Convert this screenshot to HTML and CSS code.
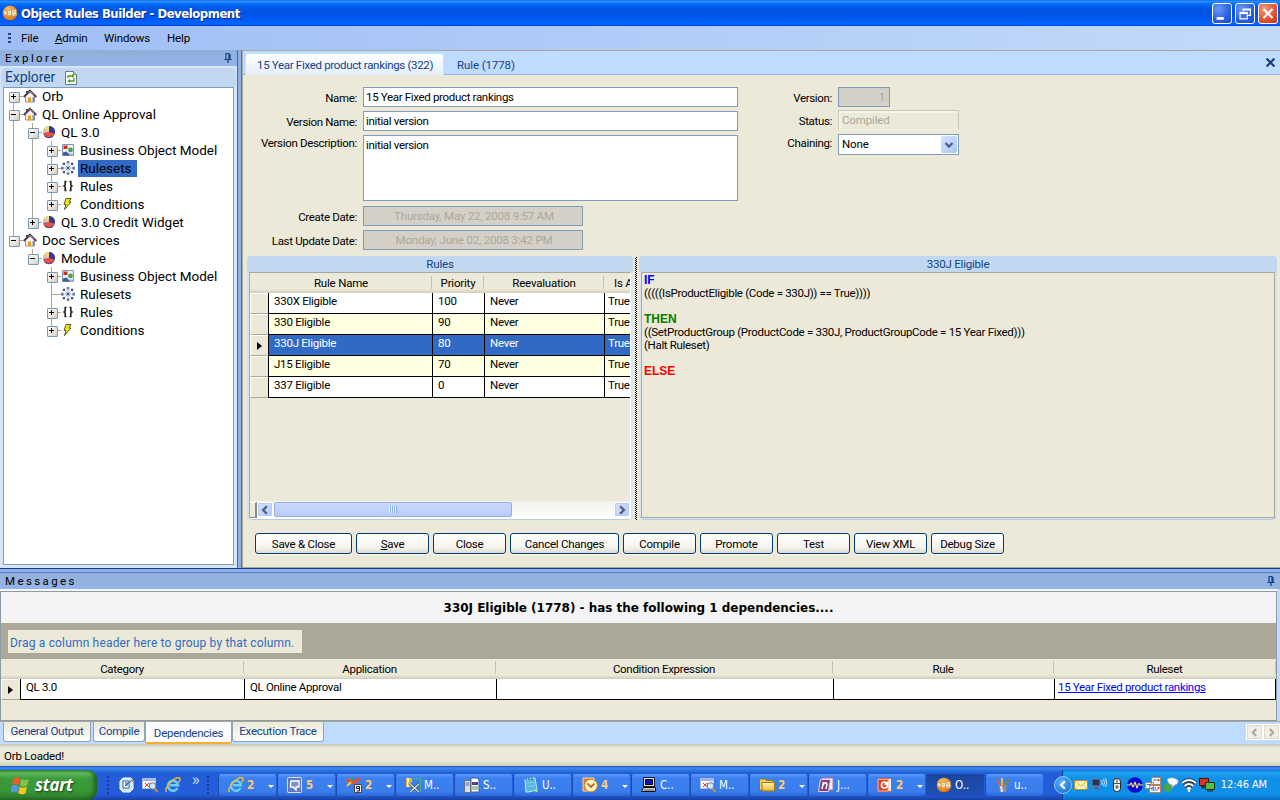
FILE: index.html
```html
<!DOCTYPE html>
<html lang="en">
<head>
<meta charset="utf-8">
<title>Object Rules Builder - Development</title>
<link rel="stylesheet" href="styles.css">
</head>
<body>
<svg class="defs" width="0" height="0" aria-hidden="true">
  <defs>
    <radialGradient id="g-orb" cx=".4" cy=".3" r=".8"><stop offset="0" stop-color="#ffc45c"/><stop offset="1" stop-color="#d96c05"/></radialGradient>
    <linearGradient id="g-fold" x2="0" y2="1"><stop offset="0" stop-color="#fff2a8"/><stop offset="1" stop-color="#e9b93a"/></linearGradient>
    <symbol id="orb" viewBox="0 0 16 16"><circle cx="8" cy="8" r="7.300" fill="url(#g-orb)"/><path d="M1 6.500l3-1 1.500 3L3 10.500zM5.500 6l3-1 1.500 3-2 3-3-1zM10 5l4.500-.5L14 7l1 3-4 1.500-1.500-3z" fill="#f9ecd0" stroke="#b07a35" stroke-width=".5"/><path d="M6.500 8h1.500M11 7h2M11.500 9.500h2" stroke="#a98a5a" stroke-width=".8"/></symbol>
    <symbol id="house" viewBox="0 0 14 14"><path d="M3 2h2v4H3z" fill="#445"/><path d="M2.500 7v6h9V7L7.500 3z" fill="#f4f2ea" stroke="#777" stroke-width=".8"/><path d="M.7 8L7 1.500 13.300 8" fill="none" stroke="#4d4268" stroke-width="1.900"/><path d="M7 2l4 4" stroke="#b8764a" stroke-width="1"/><path d="M5 8.500h3V13H5z" fill="#e69b1c"/><path d="M9.500 8h2v5h-2z" fill="#868cab"/></symbol>
    <symbol id="pie" viewBox="0 0 14 14"><circle cx="7" cy="7" r="6" fill="#5b68c0"/><path d="M1.500 9.500A6 6 0 0 0 12.700 9L7 6.500z" fill="#e8503a"/><path d="M7 7L12.800 8.500A6 6 0 0 0 7 1z" fill="#3a358f"/><path d="M1 8A6 6 0 0 1 7 1v6z" fill="#efc0a4"/><path d="M2.200 4A6 6 0 0 1 7 1v4z" fill="#f2dc78"/><path d="M3 11a6 6 0 0 0 8 0" fill="none" stroke="#4a4fb0" stroke-width="1.200"/></symbol>
    <symbol id="bom" viewBox="0 0 14 14"><path d="M1.500 1.500h11v11h-11z" fill="#eef3fb" stroke="#8493b6"/><path d="M2.500 2.500h4v3.500h-4z" fill="#d92a20"/><circle cx="9.500" cy="7" r="2.400" fill="#4f9e56"/><path d="M2 9.500l3.500-1 4 4H2z" fill="#425c95"/><path d="M8.500 10.500h3.500v2h-3z" fill="#9fb7df"/></symbol>
    <symbol id="net" viewBox="0 0 14 14"><path d="M7 3.500v7M3.500 7h7M4.500 4.500l5 5M9.500 4.500l-5 5" stroke="#5f86c9" stroke-width=".8"/><path d="M5.800.2h2.600v2.300H5.800zM5.800 11.500h2.600v2.300H5.800zM.2 5.800h2.300v2.600H.2zM11.500 5.800h2.300v2.600h-2.300zM1.800 1.800h2.200v2.200H1.800zM10 1.800h2.200v2.200H10zM1.800 10h2.200v2.200H1.800zM10 10h2.200v2.200H10zM6 6h2v2H6z" fill="#3f4c86"/><path d="M6.600.9h1v1h-1zM.8 6.600h1v1h-1zM12.200 6.600h1v1h-1zM6.600 12.200h1v1h-1z" fill="#c2cdea"/></symbol>
    <symbol id="brace" viewBox="0 0 14 14"><path d="M5.500 2.500H4.200v3.500L3 7l1.200 1v3.500H5.500M8.500 2.500H9.800v3.500L11 7 9.800 8v3.500H8.500" fill="none" stroke="#222" stroke-width="1.600"/></symbol>
    <symbol id="bolt" viewBox="0 0 14 14"><path d="M5 1.500h5L8 5h2L3.500 12.500 5 7.500H3z" fill="#f3e51c" stroke="#4b4b12" stroke-width=".9"/></symbol>
    <symbol id="refresh" viewBox="0 0 12 14"><path d="M.5.5h8l3 3v10H.5z" fill="#f8faf5" stroke="#68798a"/><path d="M8.500.5v3h3" fill="#ccd6df" stroke="#68798a"/><path d="M3 7V5h5M9 7v3H4" fill="none" stroke="#4d9b25" stroke-width="1.300"/><path d="M7 3l2.500 2L7 7zM5 8l-2.500 2L5 12z" fill="#4d9b25"/></symbol>
    <symbol id="pin" viewBox="0 0 8 10"><path d="M1.500 .5h4M2 1v5M5 1v5M6 1v5M.5 6.500h7M4 7v3" stroke="#153f83" stroke-width="1.200" fill="none"/></symbol>
    <symbol id="flag" viewBox="0 0 18 18"><path d="M3 3q3-2 6 0L8 9Q5 7 2 9z" fill="#ef5a28"/><path d="M10 3.500q3 2 7 0L15.500 9.500q-3 2-6.500 0z" fill="#82c440"/><path d="M1.700 10q3-2 6 0L6.500 16q-3-2-6 0z" fill="#5e94ee"/><path d="M8.700 10.500q3 2 6.500 0L14 16.500q-3 2-6.500 0z" fill="#fac727"/></symbol>
    <symbol id="ie" viewBox="0 0 16 16"><path d="M12.500 11A5 5 0 1 1 13 8.200H5" fill="none" stroke="#1f7fd6" stroke-width="3.600"/><path d="M12.500 11A5 5 0 1 1 13 8.200H5" fill="none" stroke="#6ccbfa" stroke-width="2.400"/><path d="M1.500 15C-1.500 12 9-1 14.500 1 16 2 14.500 4.500 13.500 5.500" fill="none" stroke="#f4bd2a" stroke-width="1.400"/></symbol>
    <symbol id="desk" viewBox="0 0 16 16"><path d="M1 4l3-3h8l2 3v8l-3 3H4l-3-3z" fill="#cfe5fa" stroke="#fff"/><path d="M4 4h6v7H4z" fill="#fff" stroke="#2b69a8"/><path d="M6 9l7-6M6 6h3M6 8h3" stroke="#1c518b"/><path d="M12 2l3 2-2 1z" fill="#e58a34"/></symbol>
    <symbol id="mag" viewBox="0 0 16 16"><path d="M.5 1.500h13v10H.5z" fill="#f5f5fb" stroke="#b5bddd"/><path d="M1 2h12v2H1z" fill="#9fb5e5"/><path d="M3 6l4 4M7 6l-4 4" stroke="#c3474b"/><path d="M7 7h5" stroke="#4960a3"/><circle cx="10.500" cy="9" r="3.300" fill="#d1ecfa" stroke="#647991"/><path d="M12.500 11.500l3 3.500" stroke="#c98f3c" stroke-width="2"/></symbol>
    <symbol id="speech" viewBox="0 0 16 16"><rect x=".5" y=".5" width="14" height="15" rx="1" fill="#6479bb" stroke="#d7def4"/><path d="M4 4h8v6H9v3l-3-3H3.500V6z" fill="#7d92cc" stroke="#fff" stroke-width="1.300"/></symbol>
    <symbol id="tools" viewBox="0 0 16 16"><path d="M2 2l4-1 3 3-3 3z" fill="#43a34a"/><path d="M1 2q4 5 8 3l5-4" fill="none" stroke="#ed4e2e" stroke-width="3"/><path d="M1 9l4-4" stroke="#f6cb3b" stroke-width="2"/><path d="M8.500 7.500h7v8h-7z" fill="#f7f2e0" stroke="#464646"/><path d="M13.500 11.500h-3v-2h3V14h-3" fill="none" stroke="#222"/></symbol>
    <symbol id="dbtool" viewBox="0 0 16 16"><path d="M5 1.500h10.500v13H5" fill="none" stroke="#55c552" stroke-dasharray="2 1"/><path d="M1 1h6v9H1z" fill="#efba32"/><path d="M2 1h2v9H2z" fill="#fff3b2"/><path d="M4 6l10 9M14 7l-9 8" stroke="#40536c" stroke-width="3"/><path d="M4 6l10 9M14 7l-9 8" stroke="#cfd6de" stroke-width="1.500"/></symbol>
    <symbol id="server" viewBox="0 0 16 16"><path d="M7 1h6l2 2v12H7z" fill="#fff" stroke="#48638f"/><path d="M.5 3.500h6v12h-6z" fill="#d9dfe8" stroke="#65718a"/><path d="M1.500 6h4M1.500 8h4" stroke="#566c92"/><path d="M8 5h6v3H8z" fill="#2c429d"/><path d="M9 6h3" stroke="#e33"/><path d="M8 10h6M8 12h6" stroke="#3c9b43"/></symbol>
    <symbol id="note" viewBox="0 0 16 16"><path d="M2 2l10-1 2 12-9 2H3z" fill="#5ab8dd" stroke="#bceafa"/><path d="M4 6l8-1M5 9h7" stroke="#7fd0ea"/><path d="M3 1v2M6 1v2M9 1v2" stroke="#234e71"/><path d="M12 15l2-3 1 3z" fill="#aadf54"/></symbol>
    <symbol id="outlook" viewBox="0 0 16 16"><path d="M1 1h11v13H1z" fill="#e67c2b" stroke="#ffd6a4"/><circle cx="9" cy="8.500" r="6.300" fill="#fff3bd" stroke="#d88e25"/><path d="M5.500 6.500L9 10l3.500-3.500" fill="none" stroke="#a8601c" stroke-width="1.700"/></symbol>
    <symbol id="pc" viewBox="0 0 16 16"><path d="M2.500.5h11v9h-11z" fill="#e2e2e2" stroke="#161616"/><path d="M4.500 2.500h7v5h-7z" fill="#0713c7" stroke="#000"/><path d="M2.500 10.500h12v4H.5z" fill="#d4d4d4" stroke="#111"/><path d="M3 13h10" stroke="#555"/></symbol>
    <symbol id="folder" viewBox="0 0 16 16"><path d="M.5 3l1-1h5l1 1.500h7V13H.5z" fill="#f3d060" stroke="#956f19"/><path d="M2.500 5.500h13V14h-12z" fill="url(#g-fold)" stroke="#a27a1c"/></symbol>
    <symbol id="journal" viewBox="0 0 16 16"><path d="M4 1h11v12H4z" fill="#f4edf5" stroke="#a47aa4"/><path d="M2.500 2.500h10l-2 12h-10z" fill="#80427a" stroke="#e5d1e8"/><path d="M4 12l1.500-7M5 8q3-4 4-1L8 12" fill="none" stroke="#fff" stroke-width="1.400"/></symbol>
    <symbol id="ppt" viewBox="0 0 16 16"><path d="M2 1.500h12.500v13H2z" fill="#fff0e9" stroke="#db5c3e"/><path d="M1 2.500h10V14H1z" fill="#dc472b" stroke="#f6ab99"/><circle cx="7.500" cy="8" r="3" fill="none" stroke="#fff" stroke-width="1.600"/><path d="M7.500 8V5H11v3z" fill="#fff"/></symbol>
    <symbol id="brush" viewBox="0 0 16 16"><path d="M5 9L2 2M8 9L7 1M9 9l5-6" stroke="#dd6340" stroke-width="2"/><path d="M7 8V1" stroke="#f2da4a" stroke-width="1.500"/><path d="M10 9l3-6" stroke="#489b3e" stroke-width="1.800"/><path d="M4 8h8l-1 7H5z" fill="#8c8f98"/><path d="M5 9h2l1 6H6z" fill="#e4e4e2"/></symbol>
    <symbol id="mail" viewBox="0 0 16 16"><path d="M1.500 3.500h13v9h-13z" fill="#fff4ae" stroke="#ab8b3c"/><path d="M2 4l6 5 6-5M2 12l4-4M14 12l-4-4" fill="none" stroke="#c9a957" stroke-width=".8"/></symbol>
    <symbol id="sound" viewBox="0 0 16 16"><path d="M1 2h8v7H1zM3 10h5v2H3z" fill="#28365b" stroke="#6681ae"/><path d="M10.500 3q1.500 2.500 0 5M12.500 2q2 3.500 0 7M14.500 1q2.500 4.500 0 9" fill="none" stroke="#d6e7fb"/></symbol>
    <symbol id="mouse" viewBox="0 0 16 16"><rect x="4.500" y="1.500" width="7" height="13" rx="3" fill="#eee" stroke="#222"/><path d="M8 1v5M5 6.500h6M8 8v4M6 10h4" stroke="#555"/></symbol>
    <symbol id="wave" viewBox="0 0 16 16"><circle cx="8" cy="8" r="7.800" fill="#0808d2"/><path d="M0 8h3q1-4 2 0t2 0q1-6 2 0t2 0q1-3 2 0h3" fill="none" stroke="#f8ed69" stroke-width="1.200"/></symbol>
    <symbol id="cards" viewBox="0 0 16 16"><path d="M.5 5.500h8v6h-8zM6.500.5h9v7h-9zM4.500 8.500h11v7h-11z" fill="#fafafa" stroke="#b9805f"/><path d="M6 11h5M6 13h7M8 3h4M2 7.500h4" stroke="#4677c6"/><path d="M12.500 2h2v2h-2zM12.500 10h2v2h-2z" fill="#d2502a"/></symbol>
    <symbol id="chat" viewBox="0 0 16 16"><circle cx="5" cy="10.500" r="4.500" fill="#42a748"/><path d="M4 2q6-3 11 1 1 4-3 5l-3 3V8Q5 8 4 2z" fill="#fff" stroke="#7ca0c4"/></symbol>
    <symbol id="wifi" viewBox="0 0 16 16"><path d="M1 6q7-6 14 0M3.500 9q4.500-4 9 0M6 12q2-2 4 0" fill="none" stroke="#222" stroke-width="3.300"/><path d="M1 6q7-6 14 0M3.500 9q4.500-4 9 0M6 12q2-2 4 0M8 12v3" fill="none" stroke="#fff" stroke-width="1.800"/></symbol>
    <symbol id="screens" viewBox="0 0 16 16"><path d="M.5 1.500h9v7h-9z" fill="#df3220" stroke="#471008"/><path d="M6.500 5.500h9v7h-9z" fill="#54bf45" stroke="#173816"/><path d="M3 9h2v2H3zM8 14h6" fill="#222" stroke="#222"/></symbol>
    <symbol id="chl" viewBox="0 0 8 8"><path d="M5.500 1l-3 3 3 3" fill="none" stroke="currentColor" stroke-width="1.900"/></symbol>
    <symbol id="chr" viewBox="0 0 8 8"><path d="M2.500 1l3 3-3 3" fill="none" stroke="currentColor" stroke-width="1.900"/></symbol>
  </defs>
</svg>

<header class="titlebar">
  <svg class="app-ico"><use href="#orb"/></svg>
  <h1>Object Rules Builder - Development</h1>
  <div class="winbtns">
    <span class="wb"><svg viewBox="0 0 20 20"><path d="M4 14h8v3H4z" fill="#fff"/></svg></span>
    <span class="wb"><svg viewBox="0 0 20 20"><path d="M8 8V5h8v7h-3M8 6h8M4.500 9h8v7h-8zM4 10h9" fill="none" stroke="#fff" stroke-width="1.300"/></svg></span>
    <span class="wb red"><svg viewBox="0 0 20 20"><path d="M5 5l10 10M15 5L5 15" stroke="#fff" stroke-width="2.300"/></svg></span>
  </div>
</header>
<nav class="menubar"><i class="grip"></i><span class="m1">File</span><span class="m2"><u>A</u>dmin</span><span class="m3">Windows</span><span>Help</span></nav>

<main class="work">
  <aside class="explorer">
    <div class="dockhead"><span>Explorer</span><svg><use href="#pin"/></svg></div>
    <div class="exphead"><span>Explorer</span><svg><use href="#refresh"/></svg></div>
    <div class="tree">
      <div class="node"><i class="x plus first"></i><svg><use href="#house"/></svg><span>Orb</span></div>
      <div class="node"><i class="x minus"></i><svg><use href="#house"/></svg><span>QL Online Approval</span></div>
      <div class="node"><i class="v"></i><i class="x minus"></i><svg><use href="#pie"/></svg><span>QL 3.0</span></div>
      <div class="node"><i class="v"></i><i class="v"></i><i class="x plus"></i><svg><use href="#bom"/></svg><span>Business Object Model</span></div>
      <div class="node"><i class="v"></i><i class="v"></i><i class="x plus"></i><svg><use href="#net"/></svg><span class="sel">Rulesets</span></div>
      <div class="node"><i class="v"></i><i class="v"></i><i class="x plus"></i><svg><use href="#brace"/></svg><span>Rules</span></div>
      <div class="node"><i class="v"></i><i class="v"></i><i class="x plus last"></i><svg><use href="#bolt"/></svg><span>Conditions</span></div>
      <div class="node"><i class="v"></i><i class="x plus last"></i><svg><use href="#pie"/></svg><span>QL 3.0 Credit Widget</span></div>
      <div class="node"><i class="x minus last"></i><svg><use href="#house"/></svg><span>Doc Services</span></div>
      <div class="node"><i></i><i class="x minus last"></i><svg><use href="#pie"/></svg><span>Module</span></div>
      <div class="node"><i></i><i></i><i class="x plus"></i><svg><use href="#bom"/></svg><span>Business Object Model</span></div>
      <div class="node"><i></i><i></i><i class="x leaf"></i><svg><use href="#net"/></svg><span>Rulesets</span></div>
      <div class="node"><i></i><i></i><i class="x plus"></i><svg><use href="#brace"/></svg><span>Rules</span></div>
      <div class="node"><i></i><i></i><i class="x plus last"></i><svg><use href="#bolt"/></svg><span>Conditions</span></div>
    </div>
  </aside>
  <div class="vsplit"></div>
  <section class="doc">
    <div class="tabs"><span class="tab on">15 Year Fixed product rankings (322)</span><span class="tab">Rule (1778)</span><b class="close"><svg viewBox="0 0 8 8"><path d="M.5.500l7 7M7.500.500l-7 7" stroke="#173f7e" stroke-width="2"/></svg></b></div>
    <div class="form">
      <div class="fields">
        <label>Name:</label><div class="inp">15 Year Fixed product rankings</div>
        <label>Version Name:</label><div class="inp">initial version</div>
        <label class="top">Version Description:</label><div class="inp area">initial version</div>
        <label>Create Date:</label><div class="inp dis">Thursday, May 22, 2008 9:57 AM</div>
        <label>Last Update Date:</label><div class="inp dis">Monday, June 02, 2008 3:42 PM</div>
      </div>
      <div class="meta">
        <label>Version:</label><div class="inp ver">1</div>
        <label>Status:</label><div class="stat">Compiled</div>
        <label>Chaining:</label><div class="combo"><span>None</span><b><svg viewBox="0 0 10 8"><path d="M1.500 2L5 5.500 8.500 2" fill="none" stroke="#4d6185" stroke-width="2.300"/></svg></b></div>
      </div>
    </div>
    <div class="panes">
      <section class="pane rules">
        <h2>Rules</h2>
        <div class="body">
          <div class="grid head"><span>Rule Name</span><span>Priority</span><span>Reevaluation</span><span class="cut">Is A</span></div>
          <div class="grid row"><i></i><span>330X Eligible</span><span>100</span><span>Never</span><span>True</span></div>
          <div class="grid row alt"><i></i><span>330 Eligible</span><span>90</span><span>Never</span><span>True</span></div>
          <div class="grid row cur"><i class="arrow"></i><span>330J Eligible</span><span>80</span><span>Never</span><span>True</span></div>
          <div class="grid row alt"><i></i><span>J15 Eligible</span><span>70</span><span>Never</span><span>True</span></div>
          <div class="grid row"><i></i><span>337 Eligible</span><span>0</span><span>Never</span><span>True</span></div>
          <div class="hscroll"><i class="stub"></i><b class="sb"><svg><use href="#chl"/></svg></b><span class="thumb"><i></i></span><b class="sb end"><svg><use href="#chr"/></svg></b></div>
        </div>
      </section>
      <div class="dots"></div>
      <section class="pane code">
        <h2>330J Eligible</h2>
        <div class="body">
          <p class="kw if">IF</p>
          <p class="c1">(((((IsProductEligible (Code = 330J)) == True))))</p>
          <p>&nbsp;</p>
          <p class="kw then">THEN</p>
          <p class="c2">((SetProductGroup (ProductCode = 330J, ProductGroupCode = 15 Year Fixed)))</p>
          <p>(Halt Ruleset)</p>
          <p>&nbsp;</p>
          <p class="kw else">ELSE</p>
        </div>
      </section>
    </div>
    <div class="buttons"><button class="w97">Save &amp; Close</button><button><u>S</u>ave</button><button>Close</button><button class="w109">Cancel Changes</button><button>Compile</button><button>Promote</button><button>Test</button><button>View XML</button><button>Debug Size</button></div>
  </section>
</main>

<section class="messages">
  <div class="dockhead"><span>Messages</span><svg><use href="#pin"/></svg></div>
  <div class="msgbox">
    <h3>330J Eligible (1778) - has the following 1 dependencies....</h3>
    <div class="group"><span>Drag a column header here to group by that column.</span></div>
    <div class="mgrid mhead"><span>Category</span><span>Application</span><span>Condition Expression</span><span>Rule</span><span>Ruleset</span></div>
    <div class="mgrid mrow"><i class="arrow"></i><span>QL 3.0</span><span>QL Online Approval</span><span></span><span></span><span><a>15 Year Fixed product rankings</a></span></div>
  </div>
  <div class="btabs"><span class="t1">General Output</span><span class="t2">Compile</span><span class="t3 on">Dependencies</span><span class="t4">Execution Trace</span><div class="arrows"><b><svg><use href="#chl"/></svg></b><b><svg><use href="#chr"/></svg></b></div></div>
</section>
<div class="status">Orb Loaded!</div>

<footer class="taskbar">
  <div class="start"><svg><use href="#flag"/></svg><span>start</span></div>
  <div class="quick"><i class="tgrip"></i><svg><use href="#desk"/></svg><svg><use href="#mag"/></svg><svg><use href="#ie"/></svg><span class="more">»</span><i class="tgrip"></i></div>
  <div class="tasks">
    <div class="task n"><svg><use href="#ie"/></svg><span>2</span></div>
    <div class="task n"><svg><use href="#speech"/></svg><span>5</span></div>
    <div class="task n"><svg><use href="#tools"/></svg><span>2</span></div>
    <div class="task"><svg><use href="#dbtool"/></svg><span>M..</span></div>
    <div class="task"><svg><use href="#server"/></svg><span>S..</span></div>
    <div class="task"><svg><use href="#note"/></svg><span>U..</span></div>
    <div class="task n"><svg><use href="#outlook"/></svg><span>4</span></div>
    <div class="task"><svg><use href="#pc"/></svg><span>C..</span></div>
    <div class="task"><svg><use href="#mag"/></svg><span>M..</span></div>
    <div class="task n"><svg><use href="#folder"/></svg><span>2</span></div>
    <div class="task"><svg><use href="#journal"/></svg><span>J...</span></div>
    <div class="task n"><svg><use href="#ppt"/></svg><span>2</span></div>
    <div class="task act"><svg><use href="#orb"/></svg><span>O..</span></div>
    <div class="task"><svg><use href="#brush"/></svg><span>u..</span></div>
  </div>
  <div class="tray"><b class="round"><svg><use href="#chl"/></svg></b><svg><use href="#mail"/></svg><svg><use href="#sound"/></svg><svg><use href="#mouse"/></svg><svg><use href="#wave"/></svg><svg><use href="#cards"/></svg><svg><use href="#chat"/></svg><svg><use href="#wifi"/></svg><svg><use href="#screens"/></svg><span>12:46 AM</span></div>
</footer>
</body>
</html>
```
FILE: styles.css
```css
* { box-sizing: border-box; }
body {
  margin: 0; width: 1280px; height: 800px; overflow: hidden;
  display: flex; flex-direction: column;
  font: 11.5px/13px Roboto, "Liberation Sans", sans-serif; letter-spacing: -.33px; color: #000; background: #ece9d8;
}
h1, h2, h3, p { margin: 0; font-size: inherit; font-weight: normal; }
svg { display: block; flex: none; }
.defs { position: absolute; }
span, label, p, h1, h2, h3, a, button { white-space: nowrap; }

/* window title */
.titlebar {
  height: 26px; flex: none; display: flex; align-items: center; padding: 0 2px;
  background: linear-gradient(#0058ee 0, #3593ff 4%, #288eff 7%, #127dff 10%, #036ffc 16%, #0262ee 22%, #0057e5 35%, #0054e3 50%, #0055eb 60%, #005bf5 75%, #0264fe 90%, #0060fc 94%, #003dd7 100%);
}
.app-ico { width: 16px; height: 16px; }
.titlebar h1 {
  font: bold 13px/16px "DejaVu Sans Condensed", sans-serif; color: #fff; letter-spacing: -.48px;
  margin-left: 3px; padding-top: 1px; flex: 1; text-shadow: 1px 1px 0 #0a2a88;
}
.winbtns { display: flex; gap: 3px; }
.wb {
  width: 20px; height: 21px; border: 1px solid #fff; border-radius: 3px;
  background: radial-gradient(circle at 30% 25%, #6d97f4, #2a5fe0 60%, #1c49c6);
}
.wb svg { width: 18px; height: 19px; }
.wb.red { background: radial-gradient(circle at 30% 25%, #f09a7c, #df5330 60%, #c4350f); }

.menubar {
  height: 24px; flex: none; display: flex; align-items: center; padding-left: 8px; letter-spacing: -.15px;
  background: linear-gradient(90deg, #9fbef5, #c3dafa);
}
.grip { width: 3px; height: 11px; margin-right: 10px; background: repeating-linear-gradient(#27418e 0 2px, transparent 2px 4px); }
.m1 { width: 34px; } .m2 { width: 49px; } .m3 { width: 63px; }

/* main area */
.work { height: 518px; flex: none; display: flex; }
.explorer { width: 237px; display: flex; flex-direction: column; background: #d7e6f6; }
.dockhead {
  height: 16px; flex: none; display: flex; justify-content: space-between; align-items: center; padding: 0 5px;
  background: linear-gradient(#90b0d8, #94b4ea);
}
.dockhead span { letter-spacing: 2.400px; font-size: 11.500px; }
.dockhead svg { width: 8px; height: 10px; }
.exphead {
  height: 19px; flex: none; margin: 2px 1px 0; padding-left: 4px; display: flex; align-items: center; gap: 10px;
  background: #c1d8f0; border-radius: 5px 5px 0 0; color: #15428b; font-size: 14px; line-height: 17px; letter-spacing: -.1px;
}
.exphead svg { width: 12px; height: 14px; }
.tree { flex: 1; margin: 0 3px 3px; border: 1px solid #7f9db9; background: #fff; }
.node { height: 18px; display: flex; align-items: center; font-size: 13.500px; line-height: 18px; letter-spacing: -.02px; }
.node:first-child { margin-top: -1px; }
.node > i { width: 19px; height: 18px; flex: none; position: relative; }
.node > svg { width: 14px; height: 14px; margin-right: 4px; }
.node > i::before { content: ""; position: absolute; left: 9px; top: 0; bottom: 0; border-left: 1px solid #aca899; display: none; }
.node > .v::before, .node > .x::before { display: block; }
.node > .first::before { top: 9px; }
.node > .last::before { bottom: 9px; }
.node > .x { background: linear-gradient(#aca899, #aca899) 10px 9px / 10px 1px no-repeat; }
.plus::after, .minus::after {
  content: ""; position: absolute; left: 5px; top: 5px; width: 9px; height: 9px; border: 1px solid #7898b5; border-radius: 1px;
  background: linear-gradient(#000, #000) 1px 3px / 5px 1px no-repeat, linear-gradient(135deg, #fff, #d5cfc2);
}
.plus::after {
  background: linear-gradient(#000, #000) 1px 3px / 5px 1px no-repeat, linear-gradient(#000, #000) 3px 1px / 1px 5px no-repeat, linear-gradient(135deg, #fff, #d5cfc2);
}
.node span { padding: 0 2px; margin-left: -1px; height: 17px; line-height: 17px; }
.node .sel { background: #316ac5; padding-right: 5px; }
.vsplit { width: 6px; background: linear-gradient(90deg, #3a69bb 1px, #8cb0ea 1px 4px, #4576c4 4px 5px, #aca899 5px); }

.doc { flex: 1; display: flex; flex-direction: column; border-top: 1px solid #aca899; border-bottom: 1px solid #aca899; min-width: 0; }
.tabs {
  height: 24px; flex: none; display: flex; align-items: center; background: #bfdbff; border-bottom: 1px solid #8fb5ea; color: #15428b; padding-left: 2px;
}
.tab { padding: 5px 13px 0; letter-spacing: -.1px; }
.tab.on { width: 199px; height: 22px; line-height: 23px; padding: 0 0 0 11px; margin: 2px 0 -1px; letter-spacing: -.32px; border: 1px solid #a5efff; border-bottom: 0; border-radius: 3px 3px 0 0; background: linear-gradient(#fff, #e4eefb); }
.close { margin-left: auto; margin-right: 5px; }
.close svg { width: 9px; height: 9px; }

.form { height: 181px; flex: none; display: flex; padding-top: 12px; }
.fields { display: grid; grid-template-columns: 114px 375px; column-gap: 6px; row-gap: 4px; grid-template-rows: 20px 20px 67px 20px 20px; align-content: start; }
.meta { display: grid; grid-template-columns: 89px 121px; column-gap: 6px; grid-template-rows: 23px 24px 21px; align-content: start; margin-left: 5px; }
label { text-align: right; padding-top: 5px; }
.fields .top { padding-top: 2px; }
.meta label:nth-of-type(3) { padding-top: 3px; }
.inp { border: 1px solid #7f9db9; background: #fff; height: 20px; line-height: 19px; padding-left: 2px; }
.area { height: 66px; }
.dis { width: 220px; background: #d4d0c8; color: #aca899; text-align: center; letter-spacing: -.2px; }
.ver { width: 52px; background: #d4d0c8; color: #aca899; text-align: right; padding-right: 4px; }
.stat { height: 20px; border: 1px solid #c9c7ba; border-bottom-color: #f4f2e8; color: #aca899; padding-left: 3px; line-height: 18px; letter-spacing: -.15px; box-shadow: inset 2px 2px #f6f4ea; }
.combo { height: 21px; border: 1px solid #7f9db9; background: #fff; display: flex; justify-content: space-between; align-items: center; padding: 1px 1px 1px 3px; letter-spacing: -.1px; }
.combo b { width: 16px; height: 17px; background: linear-gradient(135deg, #d6e1fc, #abc5f8); border-radius: 2px; padding: 5px 3px; }
.combo svg { width: 10px; height: 8px; }

/* split panes */
.panes { height: 264px; flex: none; display: flex; padding-left: 4px; }
.pane { display: flex; flex-direction: column; background: #d7e4f4; border-radius: 5px; padding: 0 2px 1px; border-bottom: 1px solid #b4cbe6; }
.pane h2 { height: 16px; line-height: 17px; text-align: center; color: #15428b; background: #c1d8f0; margin: 0 -2px; border-radius: 4px 4px 0 0; flex: none; letter-spacing: -.2px; }
.pane .body { flex: 1; background: #ece9d8; border: 1px solid #aca899; }
.rules { width: 386px; padding-bottom: 0; }
.rules .body { overflow: hidden; display: flex; flex-direction: column; border-right: 1px solid #fff; border-bottom: 1px solid #fff; }
.dots { width: 2px; margin: 1px 2px 0 2px; background: repeating-conic-gradient(#000 0 25%, transparent 0 50%) 0 0 / 2px 2px; }
.code { width: 638px; }
.code .body { padding: 0 2px; }
.code p { height: 13px; line-height: 14px; }
.code .c1 { letter-spacing: -.32px; }
.code .c2 { letter-spacing: -.3px; }
.code .kw { font: bold 12px/14px "Liberation Sans", sans-serif; letter-spacing: 0; }
.if { color: #00f; } .then { color: green; } .else { color: red; }
.grid { display: grid; grid-template-columns: 18px 164px 52px 120px 26px; width: 380px; flex: none; }
.head { grid-template-columns: 182px 52px 120px 26px; height: 20px; text-align: center; line-height: 20px; letter-spacing: -.2px; background: linear-gradient(transparent 16px, #d2cebd); }
.head span { background: linear-gradient(#c5c2b2, #c5c2b2) 100% 3px / 1px 13px no-repeat; }
.head .cut { text-align: left; padding-left: 10px; letter-spacing: -.2px; background: none; }
.row { height: 21px; }
.row span { border-left: 1px solid #000; border-bottom: 1px solid #000; background: #fff; padding-left: 5px; line-height: 16px; letter-spacing: -.25px; }
.row span:nth-child(5) { padding-left: 3px; letter-spacing: -.3px; }
.row i, .mrow i { border-bottom: 1px solid #aca899; border-top: 1px solid #fff; border-left: 1px solid #fff; }
.row.alt span { background: #ffffe1; }
.row.cur span { background: #316ac5; color: #fff; }
.arrow { display: flex; align-items: center; padding-left: 6px; }
.arrow::after { content: ""; border-left: 5px solid #000; border-top: 4px solid transparent; border-bottom: 4px solid transparent; }
.hscroll { margin-top: auto; height: 17px; display: flex; align-items: center; background: linear-gradient(#f3f1ec, #fefefb); }
.stub { width: 7px; height: 16px; background: #ece9d8; border-right: 2px solid #8d8a7c; border-bottom: 1px solid #8d8a7c; border-top: 1px solid #fff; }
.sb { width: 16px; height: 15px; border: 1px solid #fff; border-radius: 2px; background: linear-gradient(135deg, #d6e1fc, #b4c8f8); color: #4d6185; display: flex; align-items: center; justify-content: center; box-shadow: 0 0 0 1px #b8cbf0 inset; }
.sb svg { width: 10px; height: 10px; }
.thumb { width: 238px; height: 15px; margin-left: 1px; border: 1px solid #98b0e0; border-radius: 2px; background: linear-gradient(#cad8fd, #b8ccfb); display: flex; align-items: center; justify-content: center; }
.thumb i { width: 8px; height: 7px; background: repeating-linear-gradient(90deg, #eef4fe 0 1px, #8cb0f8 1px 2px); }
.end { margin-left: auto; }

.buttons { display: flex; gap: 4px; padding: 13px 0 0 12px; }
button { width: 73px; height: 21px; padding: 1px 0 0; border: 1px solid #003c74; border-radius: 3px; background: linear-gradient(#fff, #f4f3ec 70%, #dfdcd0); font: inherit; letter-spacing: -.25px; color: #000; box-shadow: 0 1px 1px #fff; }
.w97 { width: 97px; } .w109 { width: 109px; }

/* messages dock */
.messages { height: 176px; flex: none; display: flex; flex-direction: column; border-top: 1px solid #173a7a; background: #bfdbff; }
.messages .dockhead { height: 20px; padding-top: 4px; border-top: 0; background: linear-gradient(#8fb2ea 3px, #4a80d2 3px 4px, #92b0d8 4px, #95b5eb); }
.msgbox { height: 130px; flex: none; margin: 2px 3px 0 0; border: 1px solid #8c9aa8; background: #ece9d8; box-shadow: 0 -2px 0 #f4f7fb; }
.msgbox h3 { height: 31px; text-align: center; background: #f4f4f4; font: bold 12px/32px "DejaVu Sans", sans-serif; letter-spacing: -.02px; }
.group { height: 36px; background: #aca899; padding: 7px 0 0 7px; }
.group span { display: block; width: 294px; height: 23px; line-height: 26px; background: #ece9d8; color: #316ac5; padding-left: 2px; font-size: 12px; letter-spacing: .17px; }
.mgrid { display: grid; grid-template-columns: 19px 224px 252px 337px 221px 222px; }
.mhead { grid-template-columns: 243px 252px 337px 221px 222px; height: 20px; text-align: center; letter-spacing: -.3px; background: linear-gradient(transparent 16px, #cfcbb9); }
.mhead span { border-right: 1px solid #c5c2b2; height: 13px; margin: 2px 0; line-height: 17px; }
.mrow { height: 21px; }
.mrow span { border-left: 1px solid #000; border-bottom: 1px solid #000; background: #fff; line-height: 17px; padding-left: 5px; }
.mrow span:last-child { border-right: 1px solid #000; padding-left: 3px; }
.mrow a { color: #00f; text-decoration: underline; }
.btabs { height: 24px; display: flex; align-items: flex-start; padding-left: 3px; color: #15428b; border-bottom: 1px solid #9b9a92; border-top: 1px solid #aca899; letter-spacing: -.25px; }
.btabs > span { height: 20px; line-height: 19px; text-align: center; background: linear-gradient(#ece9d8, #fcfcfa); border: 1px solid #8ea5b5; border-top: 0; border-radius: 0 0 3px 3px; }
.t1 { width: 88px; margin-right: 2px; } .t2 { width: 52px; } .t3 { width: 87px; } .t4 { width: 92px; }
.btabs > .on { height: 22px; line-height: 23px; background: #fcfcfe; border-bottom: 2px solid #f7ae2a; }
.arrows { margin: 2px 0 0 auto; display: flex; }
.arrows b { width: 17px; height: 16px; background: #f1efe5; border: 1px solid #fff; color: #aca899; display: flex; align-items: center; justify-content: center; box-shadow: 0 0 0 1px #dedbcd inset; }
.arrows svg { width: 9px; height: 9px; }

.status { height: 22px; flex: none; line-height: 24px; padding-left: 4px; letter-spacing: -.2px; background: linear-gradient(#c8c5b2, #ece9d8 4px 16px, #d3cfbd); }

/* taskbar */
.taskbar { height: 34px; flex: none; display: flex; padding-top: 4px; background: linear-gradient(#1f4fbf 0, #3d8bee 2px, #2f78e4 4px, #225cd8 7px, #245edb 28px, #1941a5); }
.start { width: 97px; height: 30px; display: flex; align-items: center; padding-left: 10px; gap: 5px; border-radius: 0 9px 9px 0; background: linear-gradient(#3f8a3f, #5fb95c 3px, #3b9a3b 9px, #379937 20px, #2d7b2c); box-shadow: inset -3px -1px 4px #1f5f1f; }
.start svg { width: 20px; height: 20px; }
.start span { font: italic bold 17px/20px "Open Sans", sans-serif; letter-spacing: -.3px; color: #fff; text-shadow: 1px 1px 2px #143a14; }
.quick { width: 122px; display: flex; align-items: center; padding-left: 9px; }
.quick svg { width: 16px; height: 16px; margin-right: 7px; }
.tgrip { width: 4px; height: 20px; background: radial-gradient(circle, #173b9b 1px, transparent 1.5px) 0 0 / 4px 4px; margin-right: 9px; }
.more { color: #c5dbfc; font-size: 17px; margin: -11px 6px 0 4px; width: 9px; }
.tasks { display: flex; gap: 2px; padding-top: 4px; width: 843px; }
.task { width: 57px; height: 22px; flex: none; border-radius: 2px; background: linear-gradient(#5a9bfa, #3c81f3 4px, #3a7ceb 18px, #2b66d5); box-shadow: -1px 0 0 #1d49b0; display: flex; align-items: center; padding-left: 9px; gap: 3px; color: #fff; font: 11.500px/14px "DejaVu Sans Condensed", sans-serif; letter-spacing: 0; }
.task svg { width: 16px; height: 16px; }
.task.n span { color: #ffca6c; font-weight: bold; }
.task.n::after { content: ""; border-top: 3px solid #fff; border-left: 3px solid transparent; border-right: 3px solid transparent; margin: 2px 2px 0 auto; }
.task.act { background: linear-gradient(#1a45a0, #1e50b8); }
.tray { flex: 1; height: 30px; display: flex; align-items: center; background: linear-gradient(#0f7ae0, #1da4f0 3px, #1290e8 8px, #1190e9 24px, #0d6dc4); border-left: 1px solid #0b3f9c; }
.tray > svg { width: 16px; height: 16px; margin-right: 2px; }
.tray .round { width: 18px; height: 18px; margin: 0 1px 0 -9px; flex: none; border-radius: 50%; border: 1px solid #8fd0fa; background: radial-gradient(circle at 40% 30%, #53b2f8, #1464cf); color: #fff; display: flex; align-items: center; justify-content: center; }
.round svg { width: 10px; height: 10px; }
.tray > span { color: #fff; margin-left: auto; padding-right: 13px; font: 11px/14px "DejaVu Sans Condensed", sans-serif; letter-spacing: -.1px; }
```
